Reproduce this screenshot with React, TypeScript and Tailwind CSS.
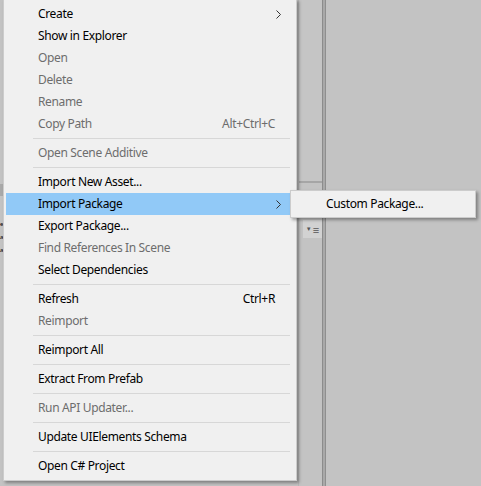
import React from 'react'

type Item =
    | { kind: 'item'; label: string; disabled?: boolean; shortcut?: string; sub?: boolean; active?: boolean }
    | { kind: 'sep' }

const items: Item[] = [
    { kind: 'item', label: 'Create', sub: true },
    { kind: 'item', label: 'Show in Explorer' },
    { kind: 'item', label: 'Open', disabled: true },
    { kind: 'item', label: 'Delete', disabled: true },
    { kind: 'item', label: 'Rename', disabled: true },
    { kind: 'item', label: 'Copy Path', disabled: true, shortcut: 'Alt+Ctrl+C' },
    { kind: 'sep' },
    { kind: 'item', label: 'Open Scene Additive', disabled: true },
    { kind: 'sep' },
    { kind: 'item', label: 'Import New Asset...' },
    { kind: 'item', label: 'Import Package', sub: true, active: true },
    { kind: 'item', label: 'Export Package...' },
    { kind: 'item', label: 'Find References In Scene', disabled: true },
    { kind: 'item', label: 'Select Dependencies' },
    { kind: 'sep' },
    { kind: 'item', label: 'Refresh', shortcut: 'Ctrl+R' },
    { kind: 'item', label: 'Reimport', disabled: true },
    { kind: 'sep' },
    { kind: 'item', label: 'Reimport All' },
    { kind: 'sep' },
    { kind: 'item', label: 'Extract From Prefab' },
    { kind: 'sep' },
    { kind: 'item', label: 'Run API Updater...', disabled: true },
    { kind: 'sep' },
    { kind: 'item', label: 'Update UIElements Schema' },
    { kind: 'sep' },
    { kind: 'item', label: 'Open C# Project' },
]

function Chevron() {
    return (
        <svg width="5" height="9" viewBox="0 0 5 9" className="shrink-0">
            <path d="M0.5 0.5 L4.5 4.5 L0.5 8.5" fill="none" stroke="#333" strokeWidth="1" />
        </svg>
    )
}

function MenuRow({ item }: { item: Item }) {
    if (item.kind === 'sep') {
        return (
            <div className="h-[7px] flex items-center pl-[27px]">
                <div className="h-px w-full bg-[#d7d7d7]" />
            </div>
        )
    }
    return (
        <div
            className={`h-[22px] flex items-center pl-[32px] pr-[9px] ${item.active ? 'bg-[#91c9f7]' : ''} ${item.disabled ? 'text-[#6d6d6d]' : 'text-[#000]'}`}
        >
            <span className="flex-1 whitespace-nowrap">{item.label}</span>
            {item.shortcut && <span className="mr-[6px] whitespace-nowrap">{item.shortcut}</span>}
            {item.sub && <Chevron />}
        </div>
    )
}

export default function App() {
    return (
        <div
            className="relative w-[481px] h-[486px] overflow-hidden bg-[#c3c3c3] flex text-[12px] leading-none tracking-[-0.35px]"
            style={{ fontFamily: '"Noto Sans", "Open Sans", sans-serif' }}
        >
            {/* background editor panels */}
            <div className="w-[4px] flex flex-col">
                <div className="h-[184px]" />
                <div className="h-[12px] bg-[#a9a9a9]" />
                <div className="h-[22px]" />
                <div className="flex flex-col text-[6px] leading-[13px] tracking-normal text-black">
                    <span>e</span>
                    <span>a</span>
                    <span>a</span>
                </div>
            </div>
            <div className="w-[294px]" />
            <div className="w-[24px] flex flex-col border-l border-[#b8b8b8]">
                <div className="h-[183px] bg-[#c5c5c5] border-b-2 border-[#a6a6a6]" />
                <div className="h-[37px]" />
                <div className="h-[18px] ml-[4px] bg-[#d2d2d2] flex items-center justify-center gap-[1px] text-[#555] tracking-normal">
                    <span className="text-[6px]">▼</span>
                    <span className="text-[11px]">≡</span>
                </div>
            </div>
            <div className="w-[4px] flex">
                <div className="w-px bg-[#8c8c8c]" />
                <div className="w-[2px] bg-[#a9a9a9]" />
                <div className="w-px bg-[#8f8f8f]" />
            </div>
            <div className="flex-1" />

            {/* context menu */}
            <div className="absolute left-[3px] -top-px w-[294px] h-[482px] bg-[#f0f0f0] border border-[#cccccc] shadow-[2px_2px_3px_rgba(0,0,0,0.35)] pt-[3px] pl-[2px] pr-[6px]">
                {items.map((it, i) => (
                    <MenuRow key={i} item={it} />
                ))}
            </div>

            {/* submenu */}
            <div className="absolute left-[290px] top-[190px] w-[186px] h-[28px] bg-[#f0f0f0] border border-[#cccccc] shadow-[2px_2px_3px_rgba(0,0,0,0.35)] p-[2px]">
                <div className="h-[22px] flex items-center pl-[33px] text-black whitespace-nowrap">Custom Package...</div>
            </div>
        </div>
    )
}
